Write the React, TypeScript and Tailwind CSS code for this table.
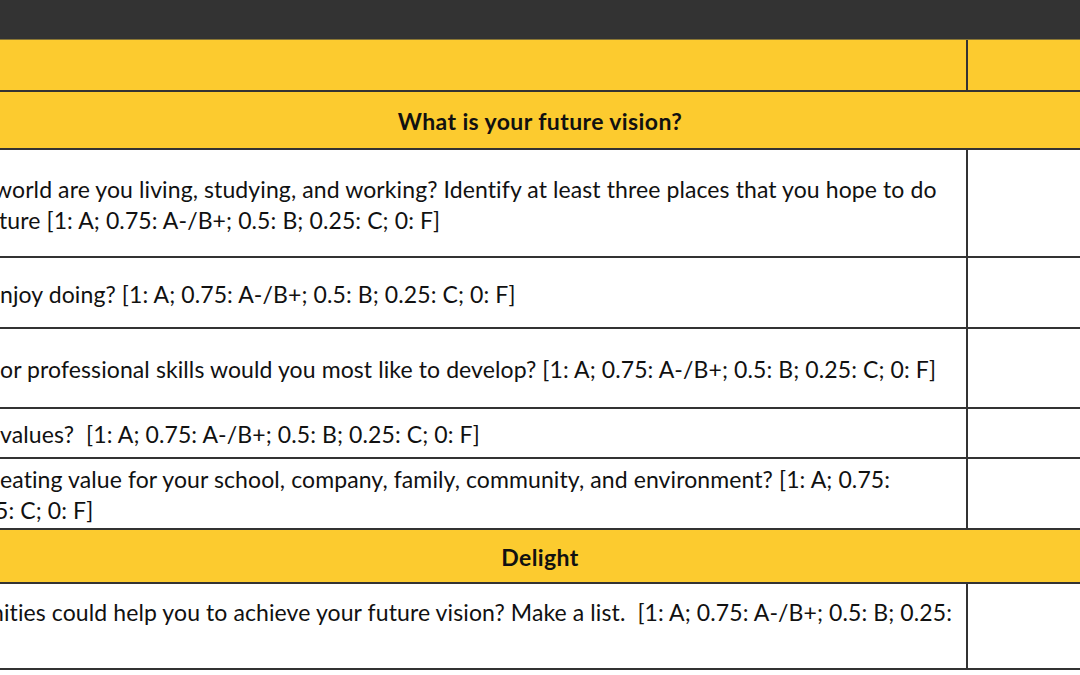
import type { ReactNode } from 'react'

type Line = { text: string; shift: string }

function TextRow({ h, lines }: { h: string; lines: Line[] }) {
  return (
    <div className={`grid grid-cols-[966px_1fr] border-b-2 border-[#333] ${h}`}>
      <div className="flex flex-col justify-center overflow-hidden pt-[3px]">
        {lines.map((l, i) => (
          <div key={i} className={`whitespace-pre leading-[31px] tracking-[0.1px] ${l.shift}`}>
            {l.text}
          </div>
        ))}
      </div>
      <div className="border-l-2 border-[#333]" />
    </div>
  )
}

function BandRow({ h, children }: { h: string; children: ReactNode }) {
  return (
    <div className={`flex items-center justify-center border-b-2 border-[#333] bg-[#fccb2f] pt-[2px] font-bold tracking-[0.4px] ${h}`}>
      {children}
    </div>
  )
}

export default function App() {
  return (
    <div className="h-[675px] w-[1080px] overflow-hidden bg-white font-['Lato',sans-serif] text-[23px] text-[#111]">
      <div className="h-[40px] border-b border-[#8a7634] bg-[#333333]" />

      <div className="grid h-[52px] grid-cols-[966px_1fr] border-b-2 border-[#333] bg-[#fccb2f]">
        <div />
        <div className="border-l-2 border-[#333]" />
      </div>

      <BandRow h="h-[58px]">What is your future vision?</BandRow>

      <TextRow
        h="h-[108px]"
        lines={[
          { text: 'world are you living, studying, and working? Identify at least three places that you hope to do', shift: '-ml-[6px]' },
          { text: 'ture [1: A; 0.75: A-/B+; 0.5: B; 0.25: C; 0: F]', shift: '-ml-[1px]' },
        ]}
      />
      <TextRow h="h-[71px]" lines={[{ text: 'njoy doing? [1: A; 0.75: A-/B+; 0.5: B; 0.25: C; 0: F]', shift: 'ml-0' }]} />
      <TextRow
        h="h-[80px]"
        lines={[{ text: 'or professional skills would you most like to develop? [1: A; 0.75: A-/B+; 0.5: B; 0.25: C; 0: F]', shift: 'ml-0' }]}
      />
      <TextRow h="h-[50px]" lines={[{ text: 'values?  [1: A; 0.75: A-/B+; 0.5: B; 0.25: C; 0: F]', shift: 'ml-0' }]} />
      <TextRow
        h="h-[71px]"
        lines={[
          { text: 'eating value for your school, company, family, community, and environment? [1: A; 0.75:', shift: 'ml-0' },
          { text: '5: C; 0: F]', shift: '-ml-[5px]' },
        ]}
      />

      <BandRow h="h-[54px]">Delight</BandRow>

      <TextRow
        h="h-[86px]"
        lines={[
          { text: 'nities could help you to achieve your future vision? Make a list.  [1: A; 0.75: A-/B+; 0.5: B; 0.25:', shift: '-ml-[9px]' },
          { text: ' ', shift: 'ml-0' },
        ]}
      />
    </div>
  )
}
